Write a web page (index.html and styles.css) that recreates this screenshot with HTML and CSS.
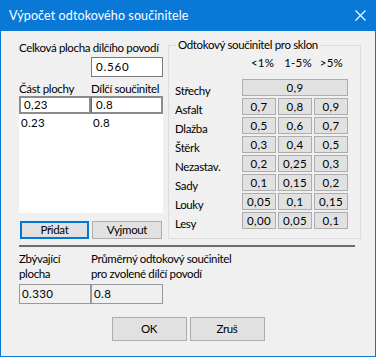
FILE: index.html
```html
<!DOCTYPE html>
<html lang="cs">
<head>
  <meta charset="UTF-8" />
  <title>Výpočet odtokového součinitele</title>
  <link rel="stylesheet" href="styles.css">
</head>
<body>
  <div class="window">
    <div class="titlebar">
      <span class="title">Výpočet odtokového součinitele</span>
      <svg class="close" width="11" height="11" viewBox="0 0 11 11">
        <path d="M0.5 0.5 L10.5 10.5 M10.5 0.5 L0.5 10.5" stroke="#fff" stroke-width="1.1" fill="none" />
      </svg>
    </div>

    <div class="content">
      <div class="top">
        <div class="left">
          <div class="label">Celková plocha dílčího povodí</div>
          <div class="edit total">0.560</div>
          <div class="cols"><span>Část plochy</span><span>Dílčí součinitel</span></div>
          <div class="list">
            <div class="edit-row">
              <div class="cell">0,23</div>
              <div class="cell second">0.8</div>
            </div>
            <div class="row"><span>0.23</span><span>0.8</span></div>
          </div>
          <div class="buttons">
            <button class="btn focused">Přidat</button>
            <button class="btn">Vyjmout</button>
          </div>
        </div>

        <fieldset class="group">
          <legend>Odtokový součinitel pro sklon</legend>
          <div class="heads">
            <span class="h1">&lt;1%</span>
            <span class="h2">1-5%</span>
            <span class="h3">&gt;5%</span>
          </div>
          <div class="grid">
            <span class="name">Střechy</span>
            <span class="val wide">0,9</span>

            <span class="name">Asfalt</span>
            <span class="val">0,7</span><span class="val">0,8</span><span class="val">0,9</span>

            <span class="name">Dlažba</span>
            <span class="val">0,5</span><span class="val">0,6</span><span class="val">0,7</span>

            <span class="name">Štěrk</span>
            <span class="val">0,3</span><span class="val">0,4</span><span class="val">0,5</span>

            <span class="name">Nezastav.</span>
            <span class="val">0,2</span><span class="val">0,25</span><span class="val">0,3</span>

            <span class="name">Sady</span>
            <span class="val">0,1</span><span class="val">0,15</span><span class="val">0,2</span>

            <span class="name">Louky</span>
            <span class="val">0,05</span><span class="val">0,1</span><span class="val">0,15</span>

            <span class="name">Lesy</span>
            <span class="val">0,00</span><span class="val">0,05</span><span class="val">0,1</span>
          </div>
        </fieldset>
      </div>

      <div class="separator"></div>

      <div class="bottom">
        <div class="info">
          <div class="caption">Zbývající<br>plocha</div>
          <div class="edit ro">0.330</div>
        </div>
        <div class="info">
          <div class="caption">Průměrný odtokový součinitel<br>pro zvolené dílčí povodí</div>
          <div class="edit ro">0.8</div>
        </div>
      </div>

      <div class="actions">
        <button class="btn big">OK</button>
        <button class="btn big">Zruš</button>
      </div>
    </div>
  </div>
</body>
</html>
```

FILE: styles.css
```css
* {
  box-sizing: border-box;
}

body {
  margin: 0;
  font-family: Lato, "Noto Sans", sans-serif;
  font-size: 11.5px;
  letter-spacing: -0.35px;
  color: #000;
  background: #f0f0f0;
}

.window {
  width: 376px;
  height: 357px;
  border: 1px solid #0a78d7;
  background: #f0f0f0;
  overflow: hidden;
}

.titlebar {
  height: 30px;
  background: #0a78d7;
  color: #fff;
  display: flex;
  align-items: center;
  justify-content: space-between;
  padding: 0 9px 1px 8px;
  font-size: 12.5px;
  letter-spacing: 0.1px;
}

.title {
  line-height: 16px;
}

.close {
  display: block;
}

.top {
  display: grid;
  grid-template-columns: 144px 193px;
  column-gap: 5px;
  align-items: start;
  padding-left: 18px;
}

/* left column */
.label {
  margin-top: 9px;
  line-height: 16px;
  white-space: nowrap;
}

.edit {
  height: 20px;
  border: 1px solid #7a7a7a;
  line-height: 18px;
  padding-left: 4px;
  letter-spacing: 0.4px;
}

.total {
  width: 72px;
  margin: 1px 0 0 72px;
  background: #fff;
  letter-spacing: 0.8px;
}

.cols {
  display: flex;
  margin-top: 5px;
  height: 14px;
  line-height: 14px;
  white-space: nowrap;
}

.cols span:first-child {
  width: 72px;
}

.list {
  height: 117px;
  background: #fff;
}

.edit-row {
  display: flex;
  height: 18px;
}

.cell {
  width: 72px;
  border: 2px solid #8c8c8c;
  line-height: 14px;
  padding-left: 3px;
  letter-spacing: 0.3px;
}

.cell.second {
  border-left-color: #666;
  border-left-width: 1px;
  padding-left: 4px;
}

.row {
  display: flex;
  line-height: 16px;
  margin-top: 1px;
  padding-left: 2px;
  letter-spacing: 0.3px;
}

.row span:first-child {
  width: 72px;
}

.buttons {
  display: flex;
  gap: 3px;
  margin-top: 8px;
  padding-left: 1px;
}

.btn {
  font: inherit;
  letter-spacing: inherit;
  color: #000;
  background: #e1e1e1;
  border: 1px solid #adadad;
  padding: 0;
  height: 18px;
  width: 70px;
  line-height: 14px;
}

.btn.focused {
  width: 69px;
  border: 2px solid #0078d7;
}

/* group box */
.group {
  margin: 6px 0 0;
  padding: 0 6px 9px;
  border: 1px solid #dcdcdc;
  min-width: 0;
}

.group legend {
  margin-left: 1px;
  padding: 0 2px;
  line-height: 16px;
}

.heads {
  display: flex;
  height: 16px;
  line-height: 16px;
  margin-top: 2px;
  letter-spacing: 0.2px;
}

.h1 {
  margin-left: 76px;
}

.h2 {
  margin-left: 10px;
}

.h3 {
  margin-left: 8px;
}

.grid {
  display: grid;
  grid-template-columns: 65px 34px 34px 34px;
  grid-auto-rows: 17px;
  gap: 2px;
  margin-top: 8px;
}

.name {
  line-height: 17px;
  margin: 3px 0 -3px;
}

.val {
  background: #e1e1e1;
  border: 1px solid #adadad;
  text-align: center;
  line-height: 15px;
  letter-spacing: 0.4px;
}

.val.wide {
  grid-column: span 3;
}

.separator {
  margin: 6px 0 0 18px;
  width: 336px;
  height: 2px;
  background: #6e6e6e;
}

/* bottom */
.bottom {
  display: flex;
  padding-left: 18px;
  margin-top: 4px;
}

.caption {
  line-height: 15px;
  height: 30px;
  white-space: nowrap;
}

.info:first-child {
  width: 72px;
}

.ro {
  width: 72px;
  margin-top: 3px;
  border-color: #999;
  padding-left: 2px;
}

.actions {
  display: flex;
  justify-content: center;
  gap: 3px;
  margin-top: 13px;
}

.btn.big {
  width: 75px;
  height: 24px;
  line-height: 20px;
}
```
